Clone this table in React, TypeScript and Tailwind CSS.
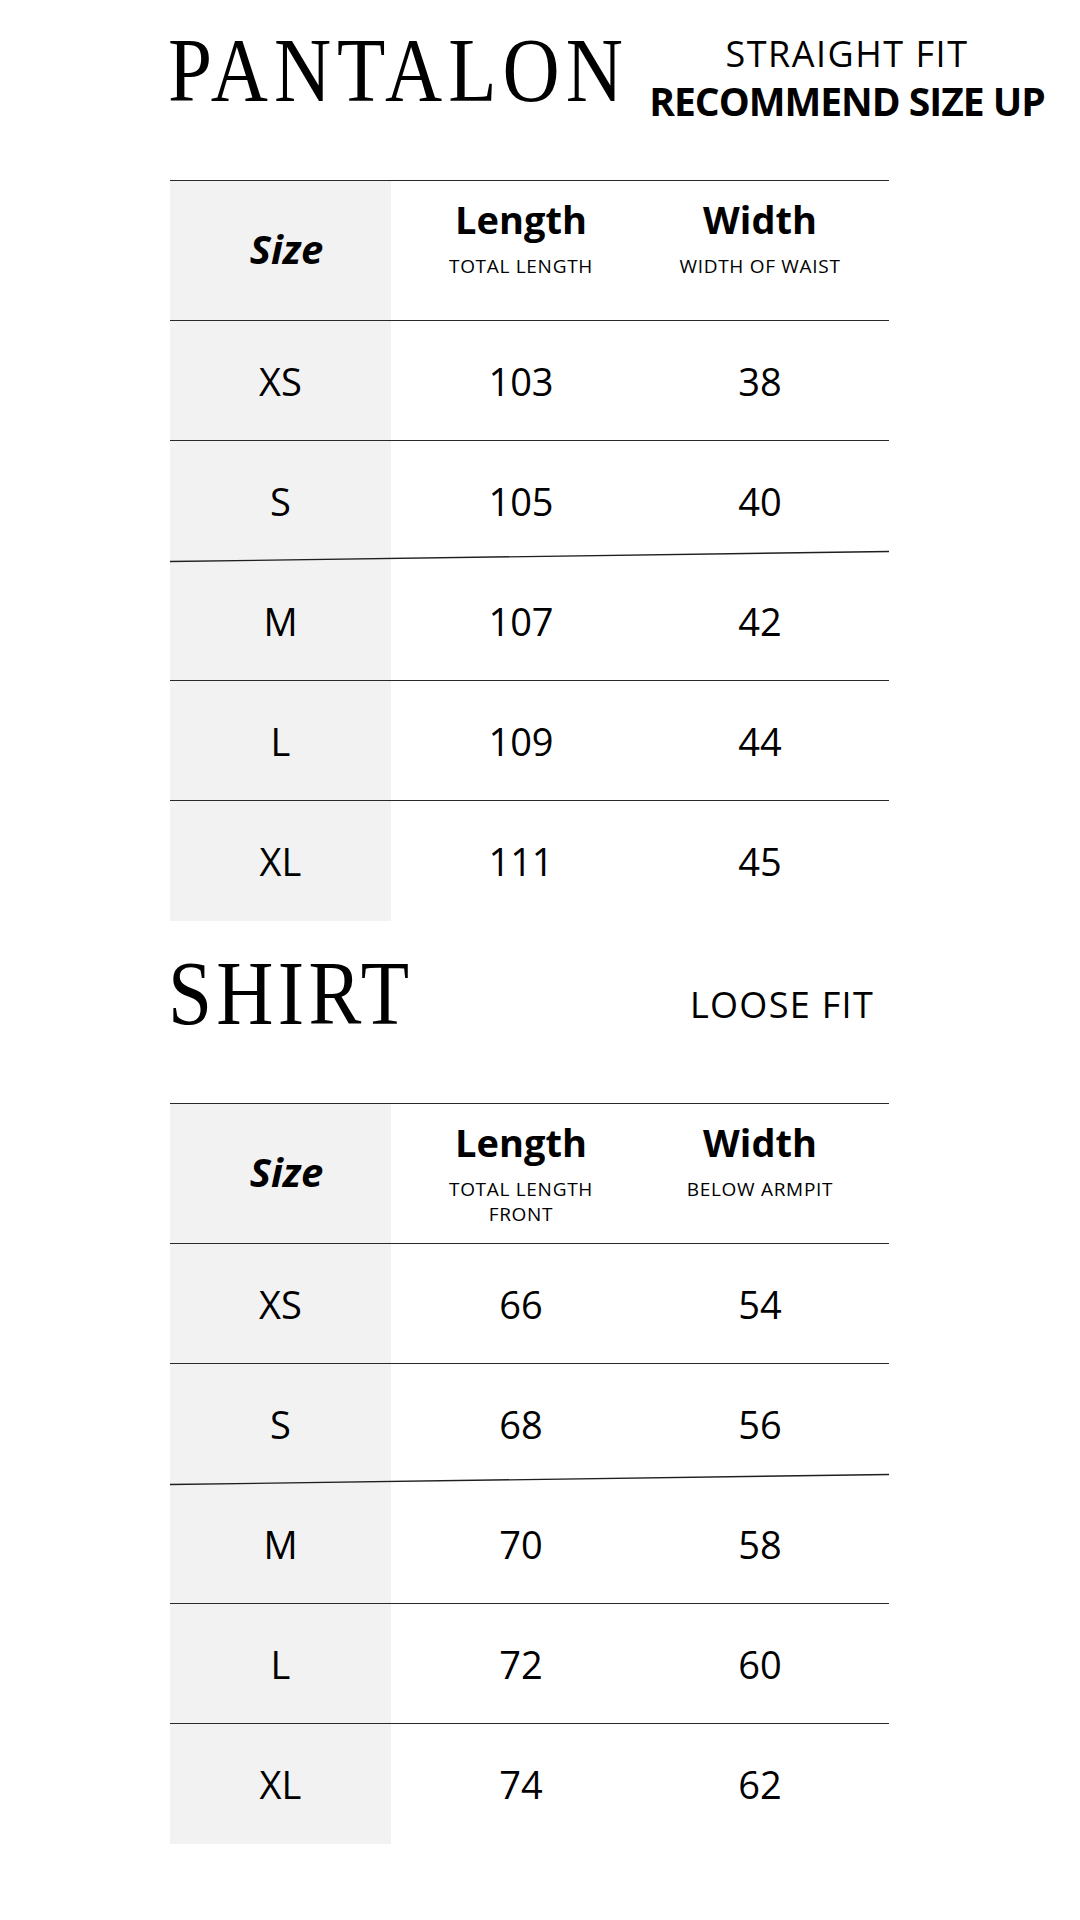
import React from 'react';

type Row = { size: string; length: string; width: string };

const pantalonRows: Row[] = [
  { size: 'XS', length: '103', width: '38' },
  { size: 'S', length: '105', width: '40' },
  { size: 'M', length: '107', width: '42' },
  { size: 'L', length: '109', width: '44' },
  { size: 'XL', length: '111', width: '45' },
];

const shirtRows: Row[] = [
  { size: 'XS', length: '66', width: '54' },
  { size: 'S', length: '68', width: '56' },
  { size: 'M', length: '70', width: '58' },
  { size: 'L', length: '72', width: '60' },
  { size: 'XL', length: '74', width: '62' },
];

const SlantedDivider: React.FC = () => (
  <div className="relative h-0 w-full">
    <svg className="absolute left-0 top-[-11px]" width="719" height="13" viewBox="0 0 719 13">
      <line x1="0" y1="11.5" x2="719" y2="1.5" stroke="#1f1f1f" strokeWidth="1.3" />
    </svg>
  </div>
);

const DataRow: React.FC<{ row: Row; border: boolean }> = ({ row, border }) => (
  <div
    className={`grid h-[120px] grid-cols-[221px_260px_238px] ${
      border ? 'border-b border-[#2a2a2a]' : ''
    }`}
  >
    <div className="flex items-center justify-center bg-[#f2f2f2] text-[38px] leading-none">
      {row.size}
    </div>
    <div className="flex items-center justify-center text-[38px] leading-none">{row.length}</div>
    <div className="flex items-center justify-center pr-5 text-[38px] leading-none">
      {row.width}
    </div>
  </div>
);

const SizeTable: React.FC<{ rows: Row[]; lengthNote: string[]; widthNote: string }> = ({
  rows,
  lengthNote,
  widthNote,
}) => (
  <div className="w-[719px] border-t border-[#2a2a2a]">
    {/* Header */}
    <div className="grid h-[140px] grid-cols-[221px_260px_238px] border-b border-[#2a2a2a]">
      <div className="flex items-center justify-center bg-[#f2f2f2] pb-1 pl-3 text-[40px] font-bold italic leading-none">
        Size
      </div>
      <div className="flex flex-col items-center pt-[15px]">
        <div className="text-[38px] font-bold leading-[46px]">Length</div>
        <div className="mt-[12px] text-center text-[19px] leading-[25px] tracking-[0.7px]">
          {lengthNote.map((l) => (
            <div key={l}>{l}</div>
          ))}
        </div>
      </div>
      <div className="flex flex-col items-center pr-5 pt-[15px]">
        <div className="text-[38px] font-bold leading-[46px]">Width</div>
        <div className="mt-[12px] text-center text-[19px] leading-[25px] tracking-[0.7px]">
          {widthNote}
        </div>
      </div>
    </div>

    {rows.map((row, i) => (
      <React.Fragment key={row.size}>
        <DataRow row={row} border={i !== 1 && i !== rows.length - 1} />
        {i === 1 && <SlantedDivider />}
      </React.Fragment>
    ))}
  </div>
);

export default function App() {
  return (
    <div className="h-[1920px] w-[1080px] bg-white font-['Open_Sans',sans-serif] text-black">
      {/* Pantalon heading */}
      <div className="flex h-[180px] pl-[168px]">
        <div className="w-[469px] pt-[24px]">
          <div className="origin-left scale-x-[0.86] whitespace-nowrap font-['Liberation_Serif',serif] text-[92px] leading-none tracking-[7px]">
            PANTALON
          </div>
        </div>
        <div className="w-[420px] pt-[30px] text-center">
          <div className="text-[36px] leading-[47px] tracking-[1.5px]">STRAIGHT FIT</div>
          <div className="text-[39px] font-bold leading-[47px] tracking-[-1px]">
            RECOMMEND SIZE UP
          </div>
        </div>
      </div>

      <div className="pl-[170px]">
        <SizeTable rows={pantalonRows} lengthNote={['TOTAL LENGTH']} widthNote="WIDTH OF WAIST" />
      </div>

      {/* Shirt heading */}
      <div className="flex h-[182px] pl-[168px] pt-[26px]">
        <div className="w-[472px]">
          <div className="origin-left scale-x-[0.86] whitespace-nowrap font-['Liberation_Serif',serif] text-[92px] leading-none tracking-[5px]">
            SHIRT
          </div>
        </div>
        <div className="mt-[34px] w-[284px] text-center text-[36px] leading-[47px] tracking-[1.3px]">
          LOOSE FIT
        </div>
      </div>

      <div className="pl-[170px]">
        <SizeTable
          rows={shirtRows}
          lengthNote={['TOTAL LENGTH', 'FRONT']}
          widthNote="BELOW ARMPIT"
        />
      </div>
    </div>
  );
}
